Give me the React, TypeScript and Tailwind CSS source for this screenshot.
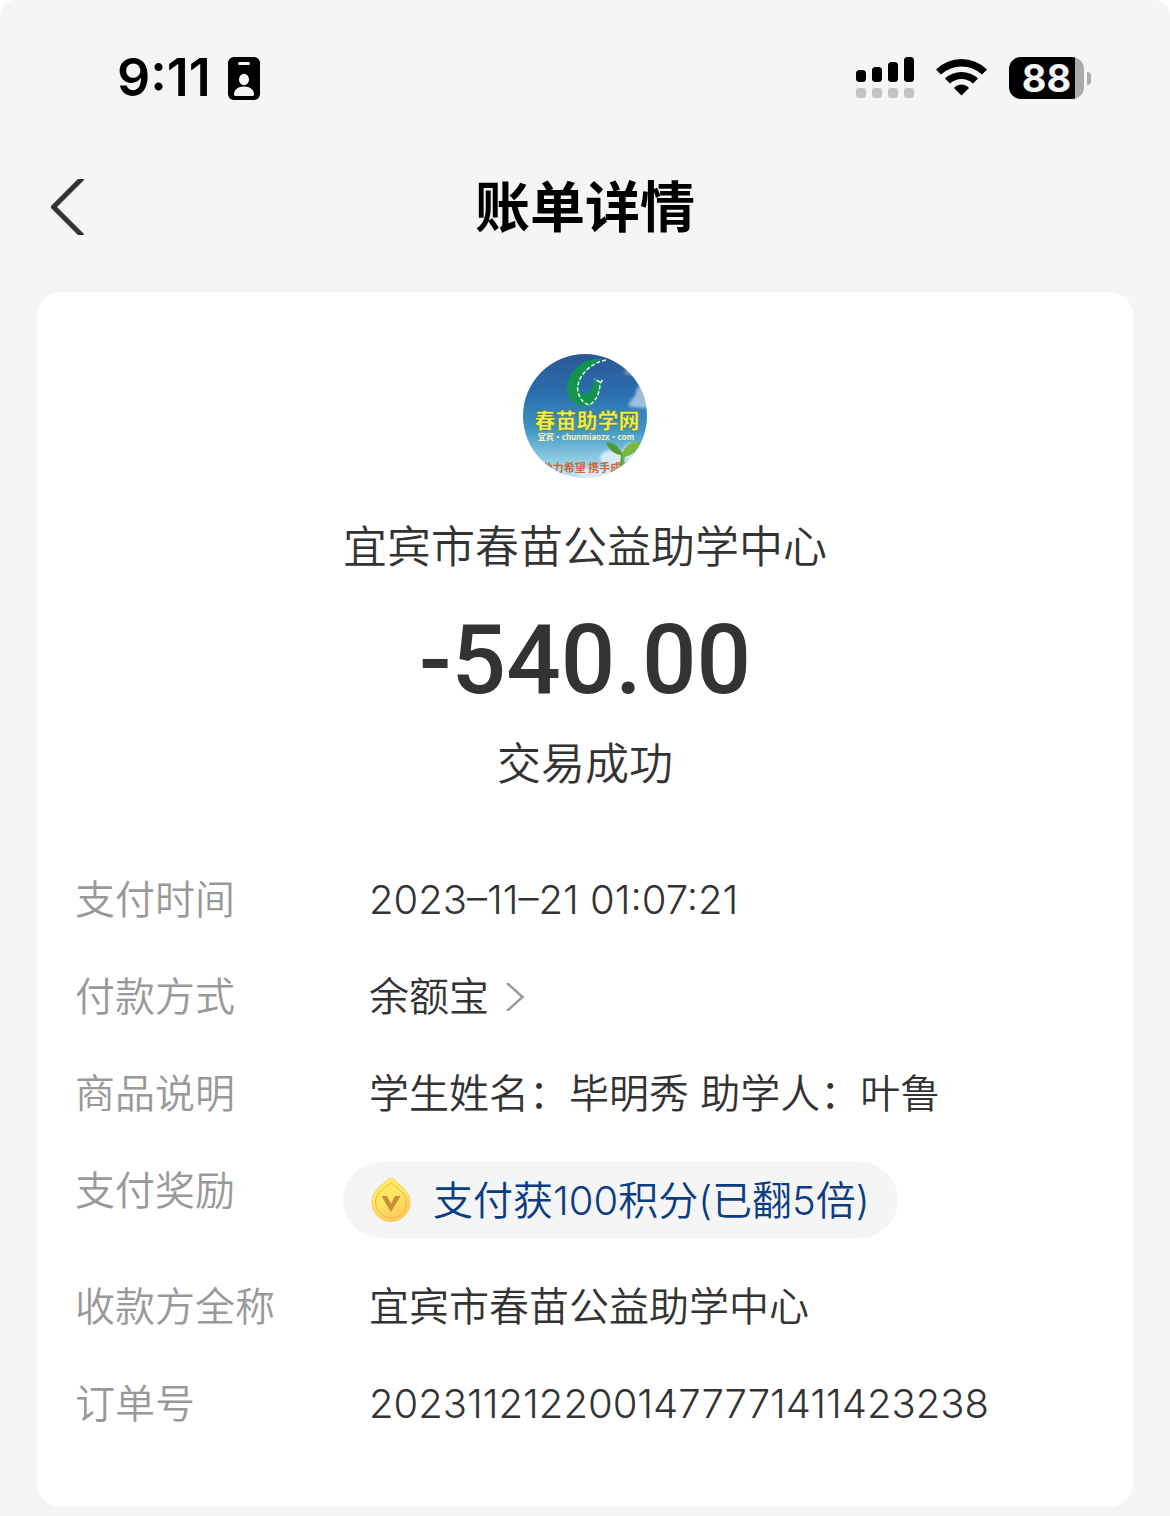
import type { ReactNode } from 'react'

const BADGE_TEXT = 'font-["Noto_Sans_CJK_SC",sans-serif]'

function StatusBar() {
  return (
    <div className="flex items-center justify-between pt-[46px] pl-[117px] pr-[79px]">
      <div className="flex items-center gap-[17px]">
        <span className="text-[52px] leading-[64px] font-semibold">9:11</span>
        <svg className="h-[43px] w-8" viewBox="0 0 32 43" aria-label="Focus">
          <rect width="32" height="43" rx="6" fill="#000" />
          <rect x="10" y="5" width="12" height="3" rx="1.5" fill="#f5f5f5" />
          <ellipse cx="16" cy="22.5" rx="5" ry="5.8" fill="#f5f5f5" />
          <path d="M6 37.5C6 32.500 10 29.500 16 29.500S26 32.500 26 37.500Q26 39 24.500 39H7.500Q6 39 6 37.500Z" fill="#f5f5f5" />
        </svg>
      </div>

      <div className="flex items-center">
        {/* Doble SIM */}
        <svg className="h-[42px] w-[58px]" viewBox="0 0 58 42" aria-label="Signal">
          <g fill="#000">
            <rect x="0" y="13" width="10" height="12" rx="3.5" />
            <rect x="16" y="10" width="10" height="15" rx="3.5" />
            <rect x="32" y="5" width="10" height="20" rx="3.5" />
            <rect x="48" y="0" width="10" height="25" rx="3.5" />
          </g>
          <g fill="#c4c4c4">
            <rect x="0" y="31" width="10" height="10" rx="3" />
            <rect x="16" y="31" width="10" height="10" rx="3" />
            <rect x="32" y="31" width="10" height="10" rx="3" />
            <rect x="48" y="31" width="10" height="10" rx="3" />
          </g>
        </svg>
        <svg className="ml-[22px] h-10 w-[51px]" viewBox="0 0 51 40" aria-label="Wi-Fi">
          <path d="M0 11.500Q11 1 25.500 1T51 11.500L46 16.500Q37 8.500 25.500 8.500T5 16.500Z" fill="#000" />
          <path d="M9 20.500Q16 14 25.500 14T42 20.500L37 25.500Q32 21 25.500 21T14 25.500Z" fill="#000" />
          <path d="M18 30Q21 26.500 25.500 26.500T33 30L25.500 37.500Z" fill="#000" />
        </svg>
        <div className="ml-[22px] flex items-center gap-[3px]" aria-label="Battery 88%">
          <div className="flex h-[42px] w-[75px] items-center justify-center rounded-xl bg-[linear-gradient(90deg,#000_66px,#ababab_66px)]">
            <span className="text-[38px] leading-[48px] font-bold text-[#f5f5f5]">88</span>
          </div>
          <div className="h-[13px] w-1 rounded-r-full bg-[#ababab]" />
        </div>
      </div>
    </div>
  )
}

function Avatar() {
  return (
    <svg className="size-[124px]" viewBox="0 0 124 124" aria-label="春苗助学网">
      <defs>
        <linearGradient id="sky" x1="0" y1="0" x2="0" y2="1">
          <stop offset="0" stopColor="#2a5896" />
          <stop offset="0.3" stopColor="#2a6cac" />
          <stop offset="0.6" stopColor="#3d94c2" />
          <stop offset="0.85" stopColor="#8fcce2" />
          <stop offset="1" stopColor="#bfe6ef" />
        </linearGradient>
        <clipPath id="round"><circle cx="62" cy="62" r="62" /></clipPath>
        <filter id="haze"><feGaussianBlur stdDeviation="1.5" /></filter>
      </defs>
      <g clipPath="url(#round)">
        <rect width="124" height="124" fill="url(#sky)" />
        <g fill="#d9eaf4" filter="url(#haze)">
          <path d="M105 52Q109 44 112 42Q113 34 118 30L126 28V54Q114 54 105 52Z" opacity="0.65" />
          <ellipse cx="107" cy="18" rx="6" ry="3" opacity="0.4" />
          <ellipse cx="90" cy="104" rx="13" ry="8" />
          <ellipse cx="110" cy="98" rx="10" ry="9" />
          <ellipse cx="80" cy="120" rx="26" ry="7" />
        </g>
        {/* Logo */}
        <path d="M80 5C60 3 44 19 44 34C44 46 54 53 63 52C72 51 78 42 79 26L71 27C70 35 66 41 61 40C52 38 56 17 80 5Z" fill="#12944f" />
        <path d="M83 6C66 9 52 25 55 38C57 46 62 50 66 51Q76 46 77 30L80 25M77 28L71 25" fill="none" stroke="#e5f4ec" strokeWidth="1.500" strokeDasharray="4 2" />
        <text x="64" y="74" textAnchor="middle" fontSize="21" fontWeight="900" fill="#f2ee4b" stroke="#426c45" strokeWidth="0.5" className={BADGE_TEXT}>春苗助学网</text>
        <text x="63" y="86" textAnchor="middle" fontSize="8" fontWeight="700" fill="#f5f3b5" className={BADGE_TEXT}>宜宾·chunmiaozx·com</text>
        <text x="64" y="118" textAnchor="middle" fontSize="11" fontWeight="700" fill="#c9673e" className={BADGE_TEXT}>助力希望 携手成长</text>
        {/* Brote */}
        <path d="M99 113Q103 101 98 97Q92 88 83 88Q87 100 98 101L97 113Z" fill="#4f9e2e" />
        <path d="M99 100Q104 86 118 88Q114 100 102 103L100 113Z" fill="#77b93f" />
      </g>
    </svg>
  )
}

function CoinIcon() {
  return (
    <svg className="h-11 w-10 shrink-0" viewBox="0 0 40 44" aria-hidden="true">
      <defs>
        <linearGradient id="coin" x1="0.2" y1="0" x2="0.7" y2="1">
          <stop offset="0" stopColor="#fff25c" />
          <stop offset="0.5" stopColor="#fde566" />
          <stop offset="1" stopColor="#fdc653" />
        </linearGradient>
      </defs>
      <path d="M17.500 1Q20-.5 22.500 1C28 7 39 12 39 24.500A19 19 0 0 1 1 24.500C1 12 12 7 17.500 1Z" fill="url(#coin)" stroke="#fbc95e" strokeWidth="1" />
      <path d="M20 4.500C25 10 35.500 14 35.500 24.500A15.500 15.500 0 0 1 4.500 24.500C4.500 14 15 10 20 4.500Z" fill="none" stroke="#eeb24e" strokeWidth="1" />
      <path d="M10.500 18H16L20 26L24 18H29.500L20 34Z" fill="#c98e34" />
    </svg>
  )
}

function Row({ label, children }: { label: string; children: ReactNode }) {
  return (
    <div className="flex">
      <dt className="w-[294px] shrink-0 text-[#999]">{label}</dt>
      <dd>{children}</dd>
    </div>
  )
}

export default function App() {
  return (
    <div className='min-h-screen rounded-t-2xl bg-[#f5f5f5] pb-[9px] font-[Inter,"Noto_Sans_CJK_SC",sans-serif] text-black'>
      <StatusBar />

      <header className="grid grid-cols-[1fr_auto_1fr] items-center px-[50px] pt-[57px] pb-[45px]">
        <button aria-label="返回" className="justify-self-start">
          <svg className="h-14 w-[34px]" viewBox="0 0 34 56">
            <path d="M32.500 -1L3.500 28L32.500 57" fill="none" stroke="#333" strokeWidth="5" strokeLinejoin="round" />
          </svg>
        </button>
        <h1 className="text-[55px] leading-[80px] font-bold">账单详情</h1>
      </header>

      <main className="mx-[37px] rounded-3xl bg-white px-[38px] pt-[62px] pb-[75px] text-[#333]">
        <section className="flex flex-col items-center">
          <Avatar />
          <h2 className="mt-9 text-[44px] leading-[66px] font-[350]">宜宾市春苗公益助学中心</h2>
          <p className="mt-6 font-[Roboto,sans-serif] text-[96px] leading-[112px] font-medium">-540.00</p>
          <p className="mt-[15px] text-[44px] leading-[66px] font-[350]">交易成功</p>
        </section>

        <dl className="mt-[74px] flex flex-col gap-10 text-[40px] leading-[57px] font-[350]">
          <Row label="支付时间">2023–11–21 01:07:21</Row>
          <Row label="付款方式">
            <button className="flex items-center gap-4">
              余额宝
              <svg className="h-7 w-5" viewBox="0 0 20 28" aria-hidden="true">
                <path d="M2 0L17.500 14L2 28" fill="none" stroke="#999" strokeWidth="2.500" />
              </svg>
            </button>
          </Row>
          <Row label="商品说明">学生姓名：毕明秀 助学人：叶鲁</Row>
          <Row label="支付奖励">
            <a href="#points" className="-ml-[26px] flex h-[76px] items-center gap-[22px] rounded-full bg-[#f5f5f5] px-7 text-[#0b3d84]">
              <CoinIcon />
              支付获100积分(已翻5倍)
            </a>
          </Row>
          <Row label="收款方全称">宜宾市春苗公益助学中心</Row>
          <Row label="订单号">2023112122001477771411423238</Row>
        </dl>
      </main>
    </div>
  )
}
